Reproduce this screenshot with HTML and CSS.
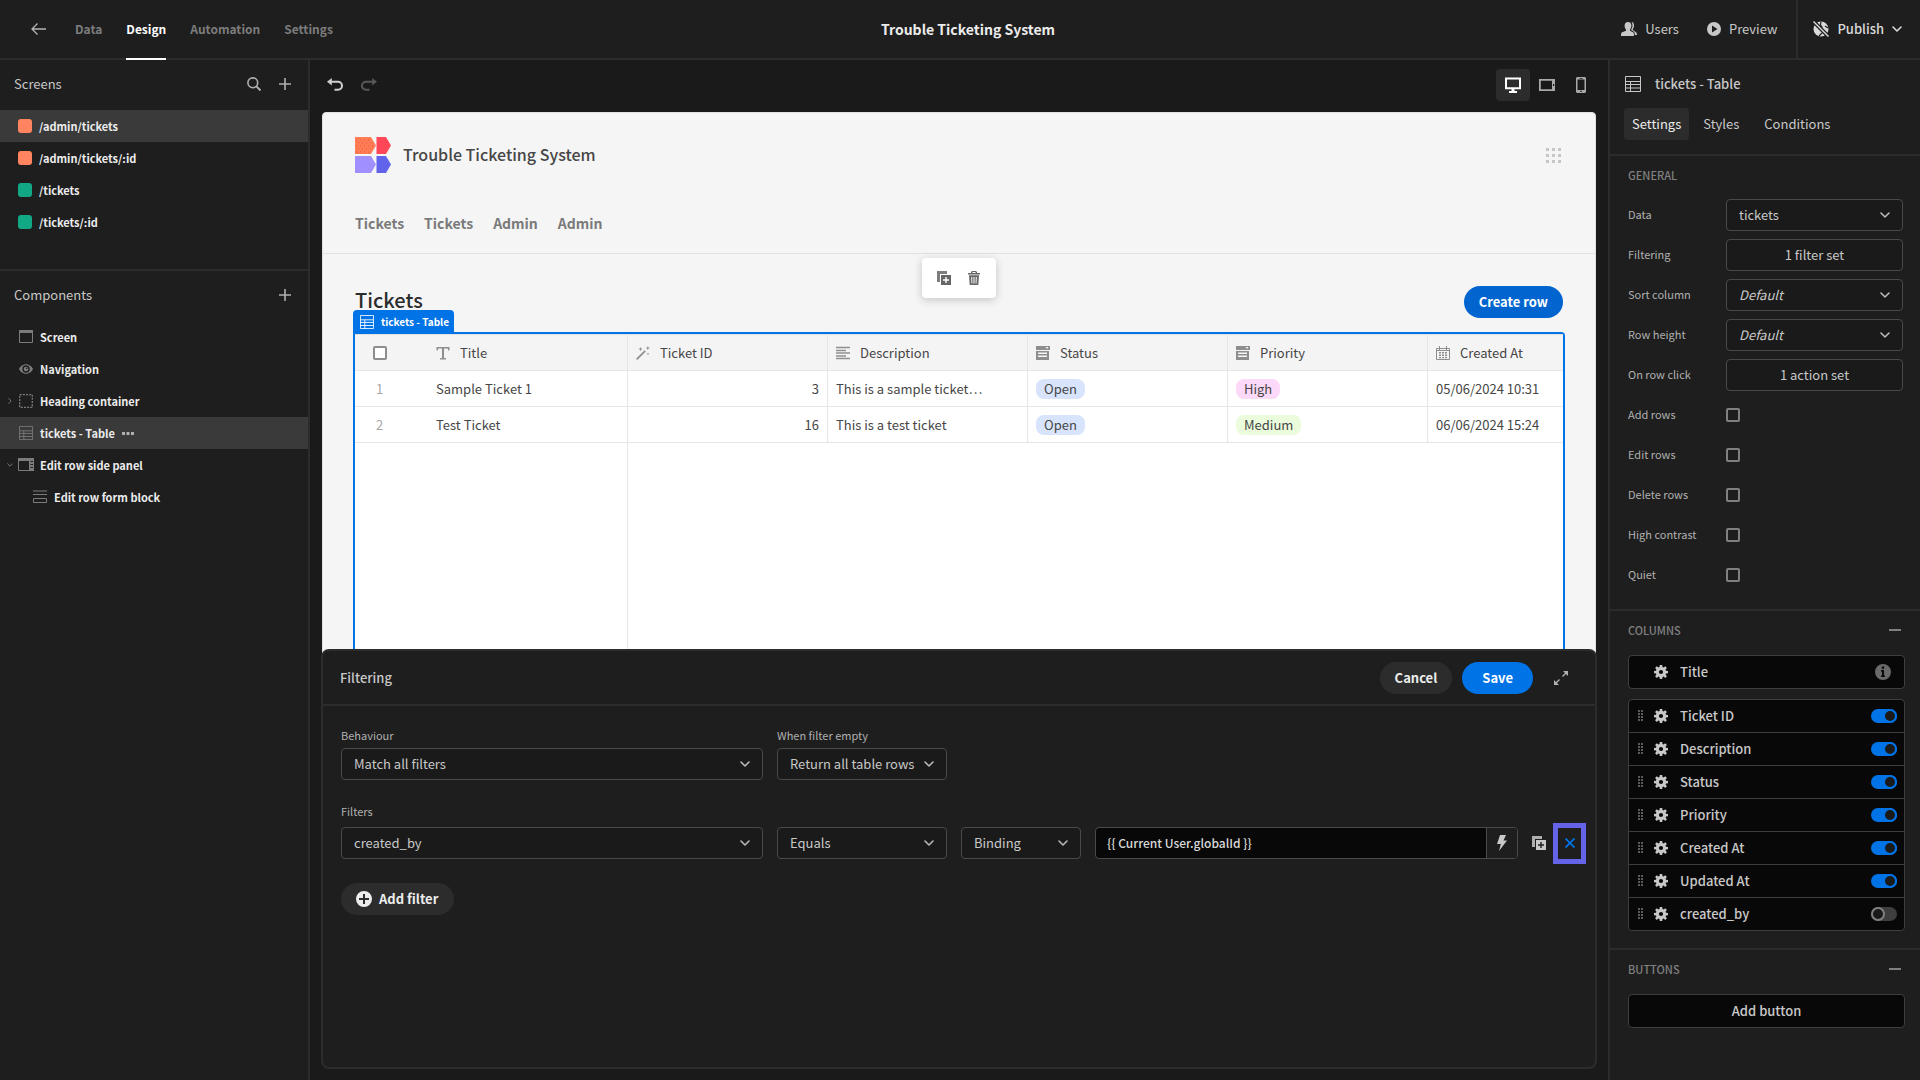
FILE: index.html
```html
<!DOCTYPE html>
<html lang="en">
<head>
<meta charset="utf-8">
<title>Trouble Ticketing System</title>
<link rel="stylesheet" href="styles.css">
</head>
<body>
<svg class="sprite" aria-hidden="true">
  <symbol id="chevron" viewBox="0 0 10 6"><path d="M1 1l4 4 4-4" fill="none" stroke="currentColor" stroke-width="1.600" stroke-linecap="round" stroke-linejoin="round"/></symbol>
  <symbol id="plus" viewBox="0 0 12 12"><path d="M6 0v12M0 6h12" stroke="currentColor" stroke-width="1.6"/></symbol>
  <symbol id="minus" viewBox="0 0 12 2"><path d="M0 1h12" stroke="currentColor" stroke-width="2"/></symbol>
  <symbol id="table" viewBox="0 0 16 16"><path d="M.5.5h15v15H.5zM.5 5.5h15M.5 8.500h15M.5 12h15M5.500 5.500v10" fill="none" stroke="currentColor"/></symbol>
  <symbol id="duplicate" viewBox="0 0 14 14"><path d="M0 0h10v3H3v8H0z" fill="currentColor" opacity=".85"/><path fill="currentColor" fill-rule="evenodd" d="M4 4h10v10H4zm4.300 2v2.300H6v1.400h2.300V12h1.400V9.700H12V8.300H9.700V6z"/></symbol>
  <symbol id="gear" viewBox="0 0 14 14"><path fill="currentColor" fill-rule="evenodd" d="M5.800 0h2.400l.3 2 1.100.5 1.600-1.300 1.700 1.700-1.300 1.600.4 1.200 2 .2v2.300l-2 .3-.4 1.100 1.300 1.600-1.700 1.700-1.600-1.300-1.100.5-.3 1.900H5.800l-.3-1.900-1.100-.5-1.600 1.300-1.700-1.700 1.300-1.600L2 8.500l-2-.3V5.900l2-.2.400-1.200-1.300-1.600 1.700-1.700 1.600 1.300L5.500 2zM7 4.900a2.100 2.100 0 1 0 0 4.200 2.100 2.100 0 0 0 0-4.200z"/></symbol>
  <symbol id="grip" viewBox="0 0 5 12"><path fill="currentColor" d="M0 0h2v2H0zM3 0h2v2H3zM0 3h2v2H0zM3 3h2v2H3zM0 6h2v2H0zM3 6h2v2H3zM0 9h2v2H0zM3 9h2v2H3z"/></symbol>
  <symbol id="options" viewBox="0 0 14 14"><path fill="currentColor" fill-rule="evenodd" d="M0 0h14v4H0zM9.500 1l1.500 2 1.500-2zM0 5h13v9H0zm2 1.500V8h9V6.500zm0 3V11h9V9.500z"/></symbol>
</svg>

<header class="topbar">
  <nav class="tabs">
    <a href="#" class="back" aria-label="Back"><svg width="15" height="12" viewBox="0 0 15 12"><path d="M15 6H1M6.500.500L1 6l5.500 5.500" fill="none" stroke="currentColor" stroke-width="1.300"/></svg></a>
    <a href="#">Data</a>
    <a href="#" class="active">Design</a>
    <a href="#">Automation</a>
    <a href="#">Settings</a>
  </nav>
  <h1 class="app-name">Trouble Ticketing System</h1>
  <div class="actions">
    <button><svg width="16" height="14" viewBox="0 0 16 14"><path fill="currentColor" d="M7 0c2.200 0 3.400 1.500 3.400 3.600 0 1.700-.6 3-1.400 3.900v1.200l3 1.600c.7.4 1 1 1 3.700H0c0-2.700.3-3.300 1.200-3.700L5 8.700V7.500C4.100 6.600 3.600 5.300 3.600 3.600 3.600 1.500 4.800 0 7 0z"/><path fill="currentColor" d="M10.500 0c1.800.200 2.500 1.500 2.500 3.400 0 1.500-.4 2.700-1.200 3.500v1.200l3.200 2.100c.7.500 1 1.200 1 2.800h-2.200c0-2-.4-2.800-1.300-3.400L10.200 8V7.300c.9-1 1.300-2.200 1.300-3.700 0-1.500-.3-2.700-1-3.600z"/></svg>Users</button>
    <button><svg width="14" height="14" viewBox="0 0 14 14"><path fill="currentColor" fill-rule="evenodd" d="M7 0a7 7 0 1 1 0 14A7 7 0 0 1 7 0zM5 3.500v7L10.500 7z"/></svg>Preview</button>
    <button class="publish"><svg width="16" height="16" viewBox="0 0 16 16"><circle cx="8" cy="8" r="7.500" fill="currentColor"/><path d="M8 .5L7.500 4l2 2.500M3 5.500l3 .5M9 12l-3 3M12 5l3 2" stroke="#1e1e1e" stroke-width="1.200" fill="none"/><path d="M0 0l16 16" stroke="#1e1e1e" stroke-width="4"/><path d="M.5.500l15 15" stroke="currentColor" stroke-width="1.400"/></svg>Publish<svg class="chev" width="10" height="6"><use href="#chevron"/></svg></button>
  </div>
</header>

<div class="workspace">
  <aside class="sidebar">
    <section class="screens">
      <div class="side-head"><h2>Screens</h2>
        <button aria-label="Search"><svg width="14" height="14" viewBox="0 0 14 14"><circle cx="5.800" cy="5.800" r="4.900" fill="none" stroke="currentColor" stroke-width="1.600"/><path d="M9.400 9.400L13.500 13.500" stroke="currentColor" stroke-width="2"/></svg></button>
        <button aria-label="Add screen"><svg width="12" height="12"><use href="#plus"/></svg></button>
      </div>
      <ul class="tree">
        <li class="selected"><i class="swatch admin"></i>/admin/tickets</li>
        <li><i class="swatch admin"></i>/admin/tickets/:id</li>
        <li><i class="swatch basic"></i>/tickets</li>
        <li><i class="swatch basic"></i>/tickets/:id</li>
      </ul>
    </section>
    <section class="components">
      <div class="side-head"><h2>Components</h2>
        <button aria-label="Add component"><svg width="12" height="12"><use href="#plus"/></svg></button>
      </div>
      <ul class="tree">
        <li><svg width="14" height="14" viewBox="0 0 14 14"><path d="M.5.5h13v12H.5z" fill="none" stroke="currentColor"/><path d="M0 0h14v3H0z" fill="currentColor"/></svg>Screen</li>
        <li><svg width="14" height="14" viewBox="0 0 14 14"><path fill="currentColor" fill-rule="evenodd" d="M7 2.200c3.500 0 6 2.600 7 4.800-1 2.200-3.500 4.800-7 4.800S1 9.200 0 7c1-2.200 3.500-4.800 7-4.800zM7 3.300a3.700 3.700 0 1 0 0 7.400 3.700 3.700 0 0 0 0-7.400z"/><circle cx="7" cy="7" r="2.300" fill="currentColor"/><circle cx="7.700" cy="6.300" r=".8" fill="#1e1e1e"/></svg>Navigation</li>
        <li><svg class="caret closed" width="6" height="4"><use href="#chevron"/></svg><svg width="14" height="14" viewBox="0 0 14 14"><path d="M.7.700h12.600v12.600H.7z" fill="none" stroke="currentColor" stroke-width="1.300" stroke-dasharray="2 1.150"/></svg>Heading container</li>
        <li class="selected"><svg width="14" height="14"><use href="#table"/></svg>tickets - Table<svg class="more" width="12" height="3" viewBox="0 0 12 3"><path fill="currentColor" d="M0 0h3v3H0zM4.500 0h3v3h-3zM9 0h3v3H9z"/></svg></li>
        <li><svg class="caret" width="6" height="4"><use href="#chevron"/></svg><svg class="wide" width="16" height="14" viewBox="0 0 16 14"><path d="M.5.5h15v12H.5z" fill="none" stroke="currentColor"/><path fill="currentColor" fill-rule="evenodd" d="M0 0h16v13h-5V3H0zm12.500 3v1H15V3zm0 3v1H15V6zm0 3v1H15V9z"/></svg>Edit row side panel</li>
        <li class="child"><svg width="14" height="14" viewBox="0 0 14 14"><path d="M0 1h14M0 4.500h14M.5 8.500h13v4H.5z" fill="none" stroke="currentColor"/></svg>Edit row form block</li>
      </ul>
    </section>
  </aside>

  <main class="canvas">
    <div class="toolbar">
      <button class="undo" aria-label="Undo"><svg width="16" height="13" viewBox="0 0 16 13"><path d="M3.500 3.800H11a4 4 0 0 1 0 8H7.500" fill="none" stroke="currentColor" stroke-width="2"/><path d="M0 3.800L4.800 0v7.600z" fill="currentColor"/></svg></button>
      <button class="redo" aria-label="Redo"><svg width="16" height="13" viewBox="0 0 16 13"><path d="M12.500 3.800H5a4 4 0 0 0 0 8h3.500" fill="none" stroke="currentColor" stroke-width="2"/><path d="M16 3.800L11.200 0v7.600z" fill="currentColor"/></svg></button>
      <div class="devices">
        <button class="on" aria-label="Desktop"><svg width="16" height="16" viewBox="0 0 16 16"><path d="M1 1.500h14v9.800H1z" fill="none" stroke="currentColor" stroke-width="2"/><path fill="currentColor" d="M6.500 12h3v2H12v2H4v-2h2.500z"/></svg></button>
        <button aria-label="Tablet"><svg width="16" height="14" viewBox="0 0 16 14"><path fill="currentColor" fill-rule="evenodd" d="M0 1h16v12H0zm1.800 1.800v8.400H13V2.800zM14 6v2h1.200V6z"/></svg></button>
        <button aria-label="Mobile"><svg width="10" height="16" viewBox="0 0 10 16"><path fill="currentColor" fill-rule="evenodd" d="M1 0h8l1 1v14l-1 1H1l-1-1V1zm.5 2.500v10.500h7V2.500zM3.500 1v.7h3V1zM4.300 13.800v1.200h1.400v-1.200z"/></svg></button>
      </div>
    </div>

    <div class="preview">
      <header class="site-head">
        <div class="brand">
          <svg width="36" height="36" viewBox="0 0 36 36"><path fill="#ff7d55" d="M0 0h16l5 8.500-5 8.500H0z"/><path stroke="#f4503c" stroke-width="1" stroke-dasharray="1 3" d="M1 3h15M3 6h16M1 9h19M3 12h16M1 15h15"/><path fill="#ff4757" d="M21.500 0H31l5 8.500-5 8.500h-9.500z"/><path fill="#9f8fff" d="M0 19h16l5 8.500-5 8.500H0z"/><path fill="#6163eb" d="M21.500 19H31l5 8.500-5 8.500h-9.500z"/></svg>
          <span class="site-name">Trouble Ticketing System</span>
          <svg class="apps" width="15" height="15" viewBox="0 0 15 15"><path fill="currentColor" d="M0 0h3v3H0zM6 0h3v3H6zM12 0h3v3h-3zM0 6h3v3H0zM6 6h3v3H6zM12 6h3v3h-3zM0 12h3v3H0zM6 12h3v3H6zM12 12h3v3h-3z"/></svg>
        </div>
        <nav class="site-nav"><a href="#">Tickets</a><a href="#">Tickets</a><a href="#">Admin</a><a href="#">Admin</a></nav>
      </header>
      <div class="page">
        <div class="page-head"><h2>Tickets</h2><button class="pill create">Create row</button></div>
        <div class="selection">
          <div class="tag"><svg width="14" height="14"><use href="#table"/></svg>tickets - Table</div>
          <div class="floating">
            <button aria-label="Duplicate"><svg width="14" height="14"><use href="#duplicate"/></svg></button>
            <button aria-label="Delete"><svg width="12" height="14" viewBox="0 0 12 14"><path fill="currentColor" fill-rule="evenodd" d="M4 0h4l1 1v1h3v1.500H0V2h3V1zm.5 1v1h3V1zM1 4.300h10L10.300 14H1.700zM3.200 6l.3 6.500h.9L4.200 6zm2.300 0v6.500h1V6zm2.300 0l-.2 6.500h.9L8.800 6z"/></svg></button>
          </div>
          <div class="grid">
            <table>
              <colgroup><col class="gutter"><col><col><col><col><col><col></colgroup>
              <thead><tr>
                <th class="mark"><input type="checkbox" aria-label="Select all"></th>
                <th><span class="th"><svg width="14" height="14" viewBox="0 0 14 14"><path fill="currentColor" d="M.5 1h13v3.500h-1.200L11.700 2.500H8v9.500l2 .3V13.500H4v-1.200l2-.3V2.500H2.300L1.700 4.500H.5z"/></svg>Title</span></th>
                <th><span class="th"><svg width="14" height="14" viewBox="0 0 14 14"><path d="M.7 13.300l8.500-8.500" stroke="currentColor" stroke-width="1.800"/><path fill="currentColor" d="M4.500 1l.6 1.500 1.500.6-1.500.6-.6 1.500-.6-1.500-1.500-.6 1.500-.6zM11.800 0l.6 1.600 1.600.5-1.600.6-.6 1.600-.5-1.600-1.600-.6 1.600-.5zM12 6.500l.4 1 1 .4-1 .4-.4 1-.4-1-1-.4 1-.4z"/></svg>Ticket ID</span></th>
                <th><span class="th"><svg width="14" height="14" viewBox="0 0 14 14"><path stroke="currentColor" stroke-width="1.300" d="M0 1.500h14M0 4.500h10M0 7h14M0 10h10M0 12.500h14"/></svg>Description</span></th>
                <th><span class="th"><svg width="14" height="14"><use href="#options"/></svg>Status</span></th>
                <th><span class="th"><svg width="14" height="14"><use href="#options"/></svg>Priority</span></th>
                <th><span class="th"><svg width="14" height="14" viewBox="0 0 14 14"><path d="M.5 2.500h13v11H.5zM3.500 0v4M10.500 0v4" fill="none" stroke="currentColor"/><path fill="currentColor" d="M1 4h12v1H1zM3 6h2v1.500H3zM6 6h2v1.500H6zM9 6h2v1.500H9zM3 8.500h2V10H3zM6 8.500h2V10H6zM9 8.500h2V10H9zM3 11h2v1.300H3zM6 11h2v1.300H6zM9 11h2v1.300H9z"/></svg>Created At</span></th>
              </tr></thead>
              <tbody>
                <tr><td class="mark">1</td><td>Sample Ticket 1</td><td class="num">3</td><td>This is a sample ticket…</td><td><span class="badge open">Open</span></td><td><span class="badge high">High</span></td><td>05/06/2024 10:31</td></tr>
                <tr><td class="mark">2</td><td>Test Ticket</td><td class="num">16</td><td>This is a test ticket</td><td><span class="badge open">Open</span></td><td><span class="badge medium">Medium</span></td><td>06/06/2024 15:24</td></tr>
              </tbody>
            </table>
            <div class="rest"></div>
          </div>
        </div>
      </div>
    </div>

    <section class="drawer">
      <div class="drawer-head">
        <h2>Filtering</h2>
        <button class="pill">Cancel</button>
        <button class="pill save">Save</button>
        <button class="expand" aria-label="Expand"><svg width="14" height="14" viewBox="0 0 14 14"><path d="M8.500 5.500L13 1M5.500 8.500L1 13" stroke="currentColor" stroke-width="1.400"/><path fill="currentColor" d="M9 0h5v5zM0 9v5h5z"/></svg></button>
      </div>
      <div class="drawer-body">
        <div class="filter-row">
          <div class="field"><label for="behaviour">Behaviour</label><span class="picker"><select id="behaviour"><option>Match all filters</option></select><svg width="10" height="6"><use href="#chevron"/></svg></span></div>
          <div class="field"><label for="empty">When filter empty</label><span class="picker"><select id="empty"><option>Return all table rows</option></select><svg width="10" height="6"><use href="#chevron"/></svg></span></div>
        </div>
        <div class="filters">
          <h3>Filters</h3>
          <div class="filter-row">
            <span class="picker"><select aria-label="Column"><option>created_by</option></select><svg width="10" height="6"><use href="#chevron"/></svg></span>
            <span class="picker"><select aria-label="Operator"><option>Equals</option></select><svg width="10" height="6"><use href="#chevron"/></svg></span>
            <span class="picker"><select aria-label="Value type"><option>Binding</option></select><svg width="10" height="6"><use href="#chevron"/></svg></span>
            <span class="binding"><input type="text" aria-label="Value" value="{{ Current User.globalId }}"><button aria-label="Pick binding"><svg width="10" height="16" viewBox="0 0 10 16"><path fill="currentColor" d="M3 0h6L6.500 5.500H10L2 16l1.800-7H0z"/></svg></button></span>
            <span class="row-actions">
              <button aria-label="Duplicate filter"><svg width="14" height="14"><use href="#duplicate"/></svg></button>
              <button class="remove" aria-label="Remove filter"><svg width="10" height="10" viewBox="0 0 10 10"><path d="M.5.5l9 9M9.500.5l-9 9" stroke="currentColor" stroke-width="1.800"/></svg></button>
            </span>
          </div>
        </div>
        <button class="pill add"><svg width="16" height="16" viewBox="0 0 16 16"><path fill="currentColor" fill-rule="evenodd" d="M8 0a8 8 0 1 1 0 16A8 8 0 0 1 8 0zM7 3v4H3v2h4v4h2V9h4V7H9V3z"/></svg>Add filter</button>
      </div>
    </section>
  </main>

  <aside class="panel">
    <div class="panel-head">
      <div class="panel-title"><svg width="16" height="16"><use href="#table"/></svg><h2>tickets - Table</h2></div>
      <div class="panel-tabs"><button class="on">Settings</button><button>Styles</button><button>Conditions</button></div>
    </div>
    <section class="group">
      <h3>GENERAL</h3>
      <div class="settings">
        <label for="data">Data</label><span class="picker"><select id="data"><option>tickets</option></select><svg width="10" height="6"><use href="#chevron"/></svg></span>
        <label for="filtering">Filtering</label><button class="set" id="filtering">1 filter set</button>
        <label for="sort">Sort column</label><span class="picker unset"><select id="sort"><option>Default</option></select><svg width="10" height="6"><use href="#chevron"/></svg></span>
        <label for="height">Row height</label><span class="picker unset"><select id="height"><option>Default</option></select><svg width="10" height="6"><use href="#chevron"/></svg></span>
        <label for="click">On row click</label><button class="set" id="click">1 action set</button>
        <label for="add">Add rows</label><input type="checkbox" id="add">
        <label for="edit">Edit rows</label><input type="checkbox" id="edit">
        <label for="delete">Delete rows</label><input type="checkbox" id="delete">
        <label for="contrast">High contrast</label><input type="checkbox" id="contrast">
        <label for="quiet">Quiet</label><input type="checkbox" id="quiet">
      </div>
    </section>
    <section class="group">
      <h3>COLUMNS<svg width="12" height="2"><use href="#minus"/></svg></h3>
      <ul class="columns">
        <li class="fixed"><svg width="14" height="14"><use href="#gear"/></svg><span>Title</span><svg class="info" width="16" height="16" viewBox="0 0 16 16"><path fill="currentColor" fill-rule="evenodd" d="M8 0a8 8 0 1 1 0 16A8 8 0 0 1 8 0zM6.800 2.500v2.200h2.400V2.500zM6 6v1.500h1v4H6V13h4v-1.500H9V6z"/></svg></li>
      </ul>
      <ul class="columns">
        <li><svg class="grip" width="5" height="12"><use href="#grip"/></svg><svg width="14" height="14"><use href="#gear"/></svg><label for="c1">Ticket ID</label><input type="checkbox" class="toggle" id="c1" checked></li>
        <li><svg class="grip" width="5" height="12"><use href="#grip"/></svg><svg width="14" height="14"><use href="#gear"/></svg><label for="c2">Description</label><input type="checkbox" class="toggle" id="c2" checked></li>
        <li><svg class="grip" width="5" height="12"><use href="#grip"/></svg><svg width="14" height="14"><use href="#gear"/></svg><label for="c3">Status</label><input type="checkbox" class="toggle" id="c3" checked></li>
        <li><svg class="grip" width="5" height="12"><use href="#grip"/></svg><svg width="14" height="14"><use href="#gear"/></svg><label for="c4">Priority</label><input type="checkbox" class="toggle" id="c4" checked></li>
        <li><svg class="grip" width="5" height="12"><use href="#grip"/></svg><svg width="14" height="14"><use href="#gear"/></svg><label for="c5">Created At</label><input type="checkbox" class="toggle" id="c5" checked></li>
        <li><svg class="grip" width="5" height="12"><use href="#grip"/></svg><svg width="14" height="14"><use href="#gear"/></svg><label for="c6">Updated At</label><input type="checkbox" class="toggle" id="c6" checked></li>
        <li><svg class="grip" width="5" height="12"><use href="#grip"/></svg><svg width="14" height="14"><use href="#gear"/></svg><label for="c7">created_by</label><input type="checkbox" class="toggle" id="c7"></li>
      </ul>
    </section>
    <section class="group">
      <h3>BUTTONS<svg width="12" height="2"><use href="#minus"/></svg></h3>
      <button class="add-button">Add button</button>
    </section>
  </aside>
</div>
</body>
</html>
```
FILE: styles.css
```css
:root {
  --bg: #1e1e1e;
  --deep: #1a1a1a;
  --black: #080808;
  --line: #2c2c2c;
  --field-line: #4a4a4a;
  --hover: #3a3a3a;
  --text: #c8c8c8;
  --muted: #7c7c7c;
  --bright: #ececec;
  --blue: #0073e6;
}

* { box-sizing: border-box; }

body {
  margin: 0;
  height: 100vh;
  display: flex;
  flex-direction: column;
  overflow: hidden;
  background: var(--bg);
  color: var(--text);
  font-family: "Noto Sans CJK SC", "Noto Sans", sans-serif;
  font-size: 13px;
  line-height: 20px;
}

h1, h2, h3, ul { margin: 0; padding: 0; }
h2, h3 { font-size: 13px; font-weight: 500; }
ul { list-style: none; }
svg { flex: none; display: block; }
.sprite { position: absolute; width: 0; height: 0; }
a { color: inherit; text-decoration: none; }

button, input, select {
  font: inherit;
  color: inherit;
  margin: 0;
}

button {
  display: flex;
  align-items: center;
  justify-content: center;
  padding: 0;
  border: 0;
  background: none;
}

input[type="checkbox"] {
  appearance: none;
  width: 14px;
  height: 14px;
  border: 2px solid #808080;
  border-radius: 2px;
}

/* Top bar */
.topbar {
  display: grid;
  grid-template-columns: 1fr auto 1fr;
  height: 60px;
  flex: none;
  border-bottom: 2px solid var(--line);
}

.tabs {
  display: flex;
  align-items: stretch;
  gap: 24px;
  padding-left: 31px;
  font-size: 12px;
  font-weight: 700;
  color: var(--muted);
}

.tabs a {
  display: flex;
  align-items: center;
  margin-bottom: -2px;
  padding: 0 0 2px;
}

.tabs .back { color: #b4b4b4; margin-right: 5px; }

.tabs .active {
  color: #fff;
  border-bottom: 2px solid #fff;
  padding-bottom: 0;
}

.app-name {
  margin-left: 16px;
  font-size: 14px;
  font-weight: 700;
  line-height: 58px;
  color: var(--bright);
}

.actions { display: flex; justify-content: flex-end; }
.actions button { gap: 8px; margin-left: 28px; }

.actions .publish {
  margin-left: 19px;
  padding: 0 18px 0 15px;
  border-left: 2px solid var(--line);
  color: #dadada;
  font-weight: 500;
}

/* Shell */
.workspace {
  flex: 1;
  min-height: 0;
  display: grid;
  grid-template-columns: 310px 1fr 312px;
}

/* Left sidebar */
.sidebar { border-right: 2px solid var(--line); }
.screens { height: 211px; border-bottom: 2px solid var(--line); }

.side-head {
  display: flex;
  align-items: center;
  height: 50px;
  padding: 0 17px 3px 14px;
  gap: 18px;
}

.side-head h2 { flex: 1; font-weight: 400; }
.side-head button { color: #b0b0b0; }

.tree li {
  display: flex;
  align-items: center;
  gap: 7px;
  height: 32px;
  padding-left: 19px;
  position: relative;
  font-size: 11px;
  font-weight: 700;
  color: var(--bright);
}

.screens .tree li { padding-left: 18px; }
.tree svg { color: #7c7c7c; }
.tree .selected { background: var(--hover); }
.tree .child { padding-left: 33px; }
.tree .wide { margin: 0 -1px; }
.tree .more { color: #b0b0b0; }
.caret { position: absolute; left: 7px; color: #a0a0a0; }
.caret.closed { transform: rotate(-90deg); }

.swatch { width: 14px; height: 14px; border-radius: 3px; }
.admin { background: #ff845f; }
.basic { background: #12a886; }

/* Canvas */
.canvas {
  display: flex;
  flex-direction: column;
  min-width: 0;
  min-height: 0;
  padding: 0 11px 11px;
  background: var(--deep);
}

.toolbar {
  display: flex;
  align-items: center;
  gap: 18px;
  flex: none;
  height: 52px;
  padding: 0 0 2px 6px;
}

.undo, .redo { padding-bottom: 2px; }
.undo { color: #d0d0d0; }
.redo { color: #585858; }
.devices { display: flex; margin: 0 -1px 0 auto; }
.devices button { width: 34px; height: 32px; border-radius: 4px; color: #a8a8a8; }
.devices .on { background: var(--line); color: #fff; }

.preview {
  flex: 1 1 545px;
  min-height: 0;
  margin: 0 1px;
  display: flex;
  flex-direction: column;
  overflow: hidden;
  background: #f5f5f5;
  border: 1px solid #e1e1e1;
  border-radius: 4px 4px 0 0;
  color: #464646;
}

.site-head {
  padding: 24px 32px 18px;
  border-bottom: 1px solid #e1e1e1;
}

.brand { display: flex; align-items: center; gap: 12px; }
.site-name { flex: 1; padding-bottom: 2px; font-size: 16px; font-weight: 500; }
.apps { color: #c6c6c6; margin-right: 2px; }

.site-nav {
  display: flex;
  gap: 20px;
  margin-top: 38px;
  font-size: 14px;
  font-weight: 700;
  line-height: 24px;
  color: #7a7a7a;
}

.page {
  flex: 1;
  min-height: 0;
  display: flex;
  flex-direction: column;
  padding: 32px 30px 0;
}

.page-head {
  display: flex;
  align-items: center;
  justify-content: space-between;
  padding: 0 2px;
  margin-bottom: 14px;
}

.page-head h2 { padding-bottom: 4px; font-size: 20px; font-weight: 500; line-height: 28px; color: #2c2c2c; }

.pill {
  height: 32px;
  padding: 0 15px;
  border-radius: 16px;
  background: var(--line);
  color: var(--bright);
  font-weight: 700;
}

.pill.create { background: #0265cf; color: #fff; }

.selection {
  position: relative;
  flex: 1;
  min-height: 0;
  display: flex;
  flex-direction: column;
  border: 2px solid var(--blue);
  border-bottom: 0;
  border-radius: 0 4px 0 0;
}

.tag {
  position: absolute;
  left: -2px;
  bottom: 100%;
  display: flex;
  align-items: center;
  gap: 7px;
  height: 24px;
  padding: 0 5px 0 7px;
  background: var(--blue);
  border-radius: 4px 4px 0 0;
  color: #fff;
  font-size: 10px;
  font-weight: 700;
}

.floating {
  position: absolute;
  bottom: 100%;
  left: 0;
  right: 0;
  width: fit-content;
  margin: 0 auto 36px;
  display: flex;
  gap: 17px;
  padding: 13px 16px 13px 15px;
  background: #fff;
  border-radius: 4px;
  box-shadow: 0 2px 8px rgba(0, 0, 0, .2);
  color: #666;
}

.grid {
  flex: 1;
  min-height: 0;
  display: flex;
  flex-direction: column;
  overflow: hidden;
  background: #fff;
  border-top: 1px solid #e1e1e1;
}

table { width: 1273px; table-layout: fixed; border-collapse: separate; border-spacing: 0; }
.gutter { width: 73px; }

th, td {
  height: 36px;
  padding: 0 8px;
  border-right: 1px solid #e6e6e6;
  border-bottom: 1px solid #e6e6e6;
  font-weight: 400;
  text-align: left;
  white-space: nowrap;
}

th { background: #f4f4f4; }
.mark { border-right: 0; padding: 0 18px; color: #a6a6a6; }
td.mark { padding-left: 21px; }
.mark input { display: block; background: #fff; border-color: #8e8e8e; }
.th { display: flex; align-items: center; gap: 10px; }
.th svg { color: #8e8e8e; }
.num { text-align: right; }

.badge {
  display: inline-block;
  padding: 0 8px;
  border-radius: 8px;
}

.open { background: #d8e4fb; }
.high { background: #fcd9f8; }
.medium { background: #ebfcdc; }

.rest { flex: 1; width: 273px; border-right: 1px solid #e6e6e6; }

/* Filter drawer */
.drawer {
  position: relative;
  flex: 1 1 420px;
  margin-top: -8px;
  background: var(--bg);
  border: 2px solid var(--line);
  border-radius: 8px;
}

.drawer-head {
  display: flex;
  align-items: center;
  height: 55px;
  padding: 0 27px 0 17px;
  border-bottom: 2px solid var(--line);
}

.drawer-head h2 { flex: 1; }
.drawer-head .pill { margin-right: 10px; }
.drawer-head .save { background: var(--blue); color: #fff; padding: 0 20px; }
.expand { width: 14px; margin-left: 11px; color: #b0b0b0; }

.drawer-body { padding: 19px 9px 0 18px; }

.filter-row {
  display: grid;
  grid-template-columns: 422px 170px 120px 1fr auto;
  column-gap: 14px;
  align-items: center;
}

.field label, .filters h3 {
  display: block;
  margin-bottom: 3px;
  font-size: 11px;
  font-weight: 400;
  line-height: 20px;
  color: #b0b0b0;
}

.picker {
  position: relative;
  display: flex;
  align-items: center;
  min-width: 0;
}

.picker svg { position: absolute; right: 13px; pointer-events: none; color: #b8b8b8; }

select, .set {
  appearance: none;
  width: 100%;
  height: 32px;
  padding: 0 12px;
  background: var(--deep);
  border: 1px solid var(--field-line);
  border-radius: 4px;
}

.unset { font-style: italic; }
.filters { padding-top: 21px; }
.filters h3 { margin-bottom: 6px; }

.binding {
  display: flex;
  height: 32px;
  border: 1px solid var(--field-line);
  border-radius: 4px;
  overflow: hidden;
  background: var(--black);
}

.binding input {
  flex: 1;
  min-width: 0;
  padding: 0 11px;
  border: 0;
  background: none;
  font-size: 12px;
  font-weight: 500;
  color: #d8d8d8;
}

.binding button { width: 31px; border-left: 1px solid var(--field-line); background: var(--bg); }
.row-actions { display: flex; align-items: center; gap: 7px; }

.remove {
  width: 33px;
  height: 41px;
  margin: -5px 0;
  border: 5px solid #6563e8;
  color: var(--blue);
}

.pill.add { margin-top: 24px; gap: 7px; padding: 0 16px 0 15px; }

/* Settings panel */
.panel { border-left: 2px solid var(--line); overflow: hidden; }
.panel-head { padding: 14px 14px; border-bottom: 2px solid var(--line); height: 96px; }
.panel-title { display: flex; align-items: center; gap: 14px; padding: 0 1px; height: 20px; }
.panel-tabs { display: flex; gap: 3px; margin-top: 14px; }
.panel-tabs button { height: 32px; padding: 0 8px; border-radius: 4px; }
.panel-tabs button + button { padding: 0 11px; }
.panel-tabs .on { background: var(--line); color: var(--bright); }

.group { padding: 0 15px 17px 18px; border-bottom: 2px solid var(--line); }
.group:last-child { border: 0; }

.group h3 {
  display: flex;
  align-items: center;
  justify-content: space-between;
  height: 39px;
  padding: 0 4px 2px 0;
  font-size: 11px;
  color: #808080;
}

.settings {
  display: grid;
  grid-template-columns: 98px 1fr;
  grid-auto-rows: 32px;
  row-gap: 8px;
  align-items: center;
  padding: 0 2px 1px 0;
  margin-top: 4px;
}

.settings label { padding-bottom: 2px; font-size: 11px; color: #b0b0b0; }

.columns {
  margin-top: 5px;
  border: 1px solid #3e3e3e;
  border-radius: 4px;
  background: var(--black);
}

.columns + .columns { margin-top: 10px; }

.columns li {
  display: flex;
  align-items: center;
  gap: 12px;
  height: 33px;
  padding: 0 7px 0 9px;
  font-weight: 500;
}

.columns li:first-child { height: 32px; }
.columns li + li { border-top: 1px solid #3e3e3e; }
.columns .fixed { padding: 0 13px 0 25px; }
.columns label, .columns span { flex: 1; }
.columns .grip { color: #5a5a5a; margin-right: -1px; }
.info { color: #6a6a6a; }

.toggle[type="checkbox"] {
  position: relative;
  width: 26px;
  border: 0;
  border-radius: 7px;
  background: #3e3e3e;
}

.toggle::after {
  content: "";
  position: absolute;
  top: 0;
  left: 0;
  box-sizing: border-box;
  width: 14px;
  height: 14px;
  border: 2px solid #808080;
  border-radius: 50%;
  background: var(--deep);
}

.toggle:checked { background: var(--blue); }
.toggle:checked::after { left: auto; right: 0; border-color: var(--blue); }

.add-button {
  width: 100%;
  height: 34px;
  margin-top: 5px;
  border: 1px solid #3e3e3e;
  border-radius: 4px;
  background: var(--black);
  font-weight: 500;
}
```
